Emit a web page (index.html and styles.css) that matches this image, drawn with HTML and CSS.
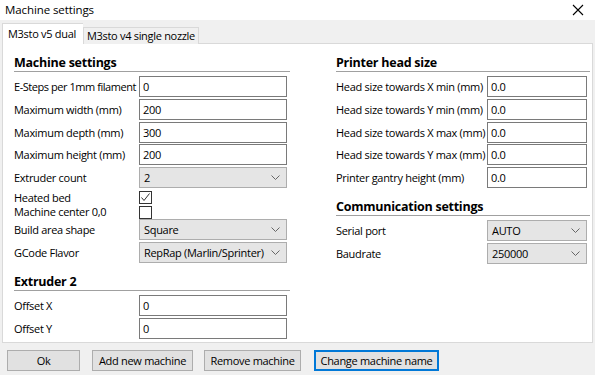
FILE: index.html
```html
<!DOCTYPE html>
<html>
<head>
<meta charset="utf-8">
<link rel="stylesheet" href="styles.css">
</head>
<body>
<div class="window">
  <div class="titlebar">
    <span class="title">Machine settings</span>
    <svg class="close" width="12" height="12" viewBox="0 0 12 12"><path d="M1 1 L11 11 M11 1 L1 11" stroke="#000" stroke-width="1.1" fill="none"/></svg>
  </div>
  <div class="body">
    <div class="tabs">
      <div class="tab active">M3sto v5 dual</div>
      <div class="tab">M3sto v4 single nozzle</div>
    </div>
    <div class="panel">
      <div class="col left">
        <div class="heading first">Machine settings</div>
        <div class="row"><span class="label tight">E-Steps per 1mm filament</span><div class="field">0</div></div>
        <div class="row"><span class="label">Maximum width (mm)</span><div class="field">200</div></div>
        <div class="row"><span class="label">Maximum depth (mm)</span><div class="field">300</div></div>
        <div class="row"><span class="label">Maximum height (mm)</span><div class="field">200</div></div>
        <div class="row"><span class="label">Extruder count</span><div class="field select"><span>2</span><svg class="chev" width="9" height="5" viewBox="0 0 9 5"><path d="M0.5 0.5 L4.5 4.5 L8.5 0.5" stroke="#666" fill="none"/></svg></div></div>
        <div class="checkrows">
          <div class="crow"><span class="label">Heated bed</span><span class="check"><svg width="11" height="11" viewBox="0 0 11 11"><path d="M1.5 5.5 L4 8.5 L9.5 1.5" stroke="#333" stroke-width="1" fill="none"/></svg></span></div>
          <div class="crow"><span class="label">Machine center 0,0</span><span class="check"></span></div>
        </div>
        <div class="row"><span class="label">Build area shape</span><div class="field select"><span>Square</span><svg class="chev" width="9" height="5" viewBox="0 0 9 5"><path d="M0.5 0.5 L4.5 4.5 L8.5 0.5" stroke="#666" fill="none"/></svg></div></div>
        <div class="row"><span class="label">GCode Flavor</span><div class="field select"><span>RepRap (Marlin/Sprinter)</span><svg class="chev" width="9" height="5" viewBox="0 0 9 5"><path d="M0.5 0.5 L4.5 4.5 L8.5 0.5" stroke="#666" fill="none"/></svg></div></div>
        <div class="heading">Extruder 2</div>
        <div class="row"><span class="label">Offset X</span><div class="field">0</div></div>
        <div class="row"><span class="label">Offset Y</span><div class="field">0</div></div>
      </div>
      <div class="col right">
        <div class="heading first">Printer head size</div>
        <div class="row"><span class="label">Head size towards X min (mm)</span><div class="field">0.0</div></div>
        <div class="row"><span class="label">Head size towards Y min (mm)</span><div class="field">0.0</div></div>
        <div class="row"><span class="label">Head size towards X max (mm)</span><div class="field">0.0</div></div>
        <div class="row"><span class="label">Head size towards Y max (mm)</span><div class="field">0.0</div></div>
        <div class="row"><span class="label">Printer gantry height (mm)</span><div class="field">0.0</div></div>
        <div class="heading">Communication settings</div>
        <div class="row"><span class="label">Serial port</span><div class="field select"><span>AUTO</span><svg class="chev" width="9" height="5" viewBox="0 0 9 5"><path d="M0.5 0.5 L4.5 4.5 L8.5 0.5" stroke="#666" fill="none"/></svg></div></div>
        <div class="row"><span class="label">Baudrate</span><div class="field select"><span>250000</span><svg class="chev" width="9" height="5" viewBox="0 0 9 5"><path d="M0.5 0.5 L4.5 4.5 L8.5 0.5" stroke="#666" fill="none"/></svg></div></div>
      </div>
    </div>
    <div class="buttons">
      <div class="btn b-ok">Ok</div>
      <div class="btn b-add">Add new machine</div>
      <div class="btn b-rem">Remove machine</div>
      <div class="btn b-chg focused">Change machine name</div>
    </div>
  </div>
</div>
</body>
</html>
```
FILE: styles.css
```css
* { box-sizing: border-box; }
html, body { margin: 0; padding: 0; }
body {
  width: 595px;
  height: 375px;
  overflow: hidden;
  font-family: "Open Sans", "Noto Sans", sans-serif;
  font-size: 11px;
  letter-spacing: -0.3px;
  color: #000;
  background: #f0f0f0;
}
.window { width: 595px; height: 375px; display: flex; flex-direction: column; }
.titlebar {
  height: 20px;
  background: #fff;
  display: flex;
  align-items: center;
  justify-content: space-between;
  padding: 0 11px 0 5px;
  font-size: 11.5px;
  letter-spacing: -0.1px;
}
.title { line-height: 20px; }
.close { display: block; }
.body { padding-top: 3px; }
.tabs {
  display: flex;
  align-items: flex-end;
  padding-left: 2px;
  height: 21px;
  margin-bottom: -1px;
  position: relative;
  z-index: 1;
}
.tab {
  height: 17px;
  line-height: 16px;
  padding: 0 3px 0 3px;
  border: 1px solid #d9d9d9;
  border-bottom: none;
  background: #f0f0f0;
  white-space: nowrap;
}
.tab.active {
  height: 21px;
  line-height: 19px;
  background: #fff;
  padding: 0 7px 0 5px;
  border-right: none;
}
.panel {
  margin-left: 2px;
  width: 591px;
  height: 300px;
  background: #fff;
  border: 1px solid #d9d9d9;
  display: flex;
  padding: 11px 0 0 11px;
  gap: 46px;
}
.col { display: flex; flex-direction: column; }
.col.left { width: 276px; }
.col.right { width: 254px; }
.heading {
  font-weight: bold;
  font-size: 12.5px;
  letter-spacing: -0.25px;
  line-height: 15px;
  height: 17px;
  border-bottom: 1px solid #a0a0a0;
  margin: 9px 0 4px 0;
}
.heading.first { margin-top: 0; }
.row {
  display: flex;
  align-items: center;
  height: 21px;
  margin-bottom: 1.75px;
}
.label { white-space: nowrap; }
.label.tight { letter-spacing: -0.45px; }
.left .row .label, .left .crow .label { width: 125px; flex: none; }
.right .row .label { width: 151px; flex: none; }
.field {
  height: 21px;
  border: 1px solid #7a7a7a;
  background: #fff;
  padding: 0 3px;
  line-height: 19px;
  white-space: nowrap;
  display: flex;
  align-items: center;
  justify-content: space-between;
}
.left .field { width: 148px; }
.right .field { width: 100px; }
.field.select {
  background: #e5e5e5;
  border-color: #adadad;
  padding: 0 6px 0 4px;
}
.chev { display: block; flex: none; }
.checkrows { margin-top: 0.5px; margin-bottom: 0; }
.crow {
  display: flex;
  align-items: center;
  height: 14.5px;
  line-height: 14px;
}
.check {
  width: 13px;
  height: 13px;
  border: 1px solid #333;
  background: #fff;
  display: flex;
  align-items: center;
  justify-content: center;
}
.check svg { display: block; }
.buttons {
  display: flex;
  padding: 7px 0 0 7px;
}
.btn {
  height: 21px;
  line-height: 19px;
  background: #e1e1e1;
  border: 1px solid #adadad;
  text-align: center;
  white-space: nowrap;
}
.b-ok { width: 73px; margin-right: 12px; }
.b-add { width: 101px; margin-right: 11px; }
.b-rem { width: 97px; margin-right: 13px; }
.b-chg { width: 125px; }
.btn.focused { border: 2px solid #0078d7; line-height: 17px; }
```
